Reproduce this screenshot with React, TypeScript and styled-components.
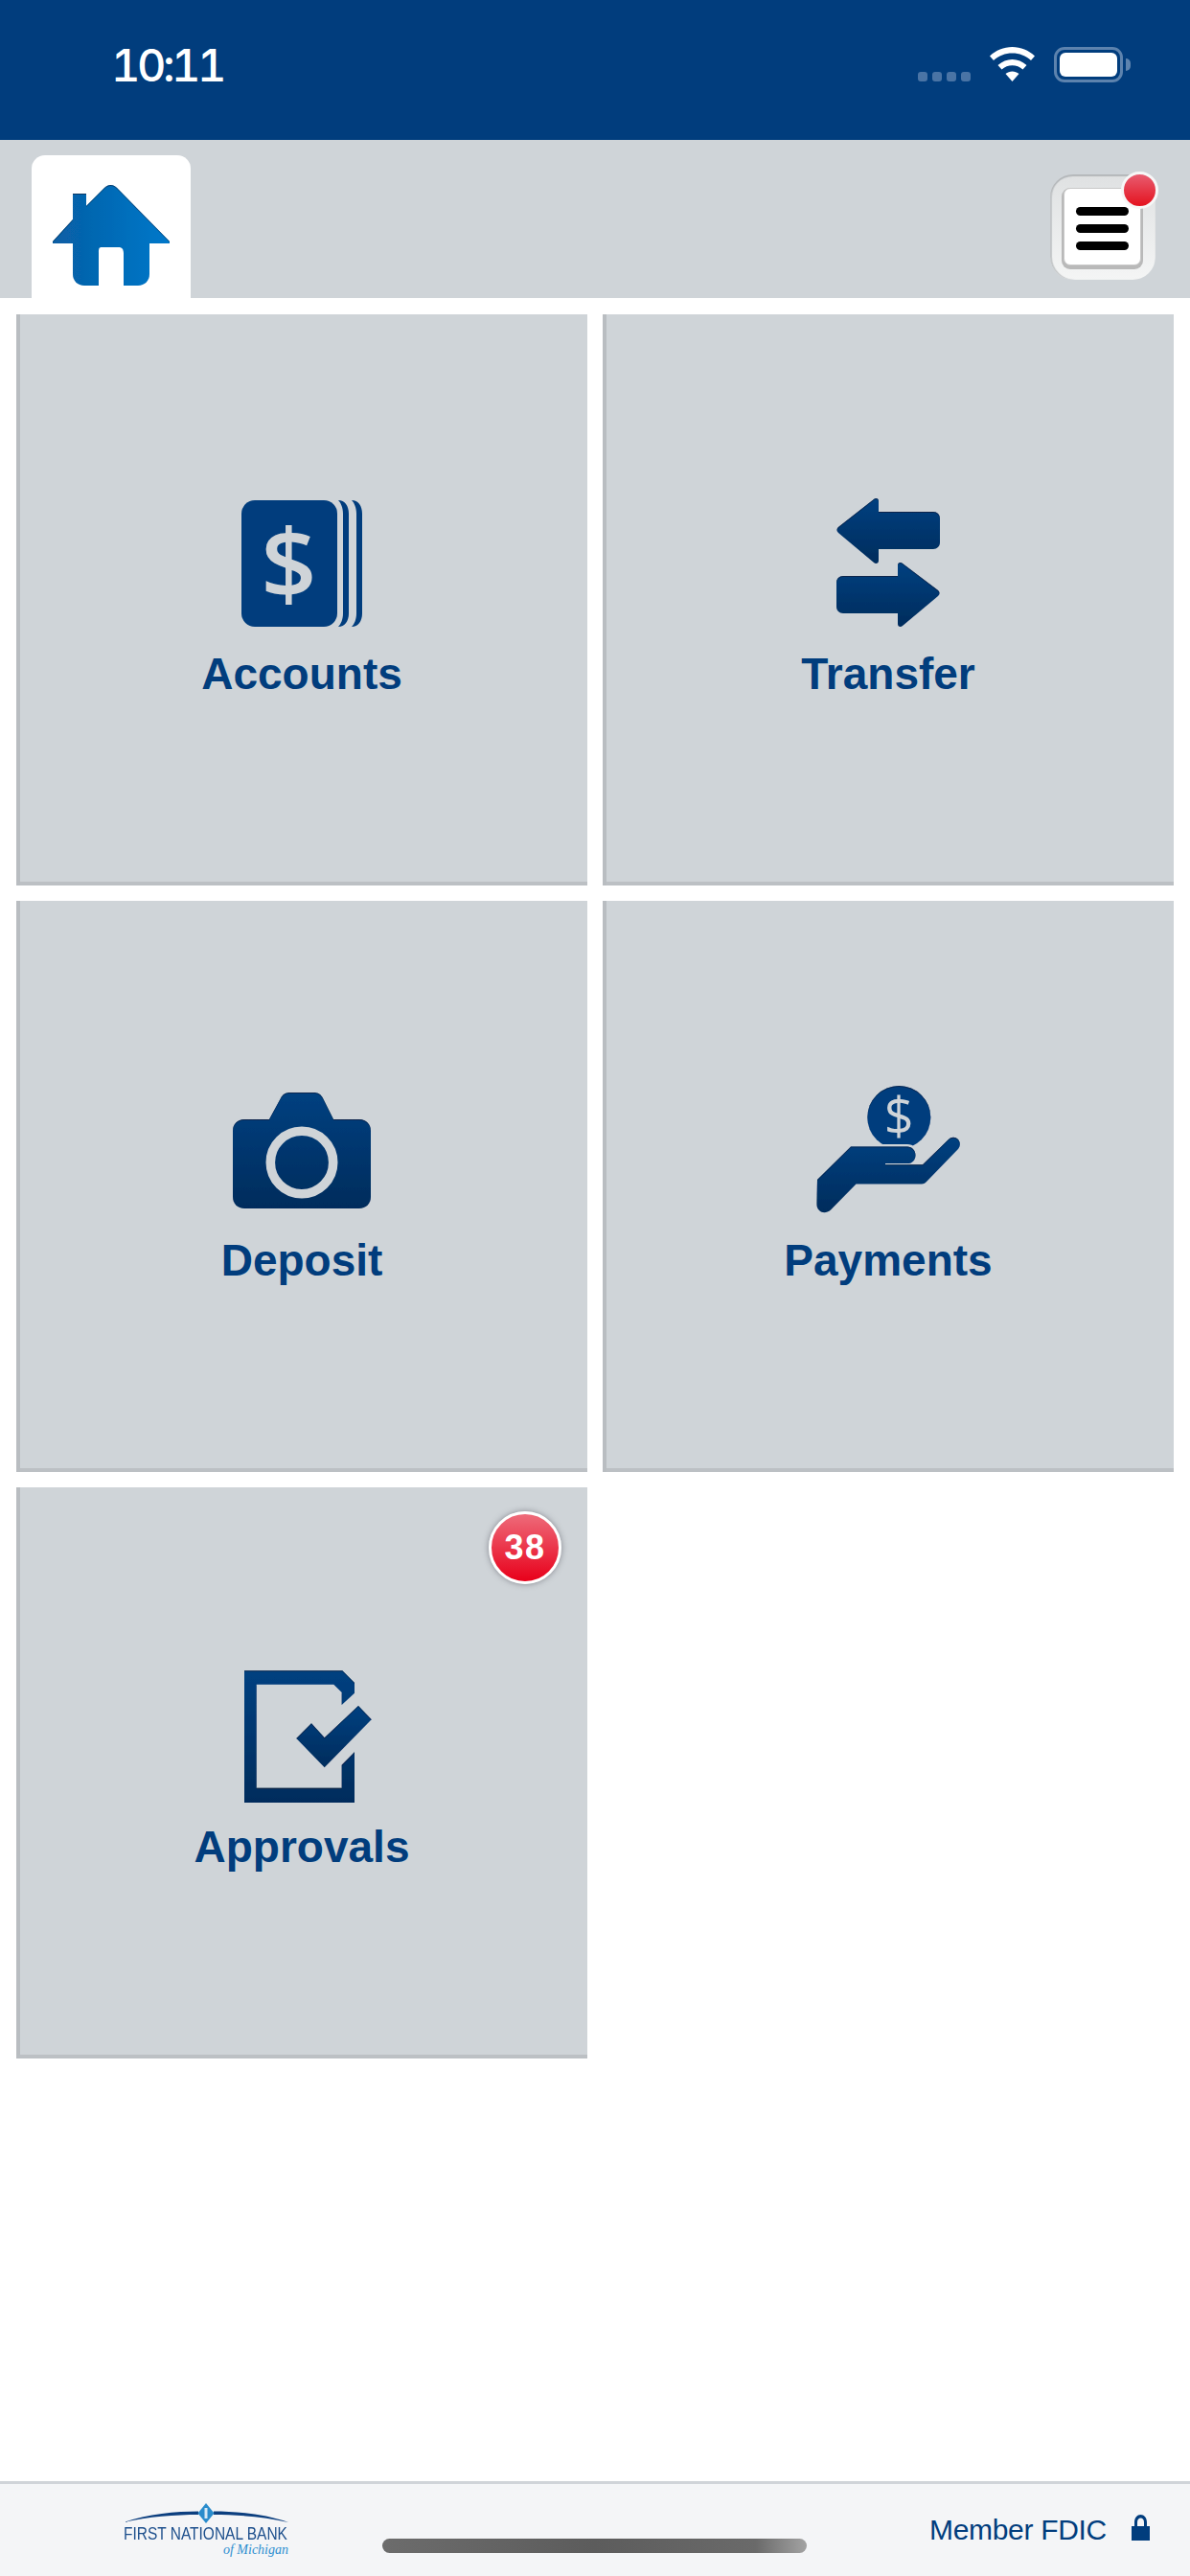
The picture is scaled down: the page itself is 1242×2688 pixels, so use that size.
import React from "react";
import styled, { createGlobalStyle } from "styled-components";

const GlobalStyle = createGlobalStyle`
  html, body {
    margin: 0;
    padding: 0;
    background: #fff;
    font-family: "Liberation Sans", Arial, sans-serif;
  }
`;

const Page = styled.div`
  width: 1242px;
  height: 2688px;
  display: flex;
  flex-direction: column;
  background: #fff;
  overflow: hidden;
`;

// status bar
const StatusBar = styled.div`
  height: 146px;
  flex: none;
  display: flex;
  justify-content: space-between;
  padding: 44px 70px 0 116px;
  box-sizing: border-box;
  background: #013d7d;
  color: #fff;
`;

const Clock = styled.div`
  font-family: Inter, "Liberation Sans", sans-serif;
  font-size: 47px;
  font-weight: 500;
  line-height: 48px;
  letter-spacing: -3.5px;
  font-variant-numeric: tabular-nums;
`;

const StatusIcons = styled.div`
  display: flex;
  align-items: flex-start;
  padding-top: 5px;
`;

const SignalDots = styled.div`
  display: flex;
  gap: 5px;
  margin: 26px 20px 0 0;
`;

const SignalDot = styled.span`
  width: 10px;
  height: 10px;
  border-radius: 3px;
  background: #4a74a5;
`;

const Battery = styled.div`
  width: 72px;
  height: 37px;
  margin-left: 20px;
  padding: 3px;
  box-sizing: border-box;
  border: 3px solid #5d83ae;
  border-radius: 11px;
  position: relative;
  &::before {
    content: "";
    display: block;
    height: 100%;
    background: #fff;
    border-radius: 6px;
  }
  &::after {
    content: "";
    position: absolute;
    right: -11px;
    top: 9px;
    width: 5px;
    height: 13px;
    border-radius: 0 6px 6px 0;
    background: #5d83ae;
  }
`;

// header
const Header = styled.div`
  height: 165px;
  flex: none;
  display: flex;
  justify-content: space-between;
  padding: 16px 36px 0 33px;
  box-sizing: border-box;
  background: #cfd4d8;
`;

const HomeTab = styled.div`
  width: 166px;
  height: 149px;
  background: #fff;
  border-radius: 14px 14px 0 0;
`;

const MenuButton = styled.div`
  width: 110px;
  height: 110px;
  margin-top: 20px;
  padding: 14px 15px 15px 14px;
  box-sizing: border-box;
  position: relative;
  border-radius: 24px;
  background: linear-gradient(#dfe1e2, #f4f5f5);
  box-shadow: inset 0 2px 1px #b4b7ba, inset 2px 0 1px #c4c7c9;
`;

const MenuFace = styled.div`
  height: 100%;
  display: flex;
  flex-direction: column;
  align-items: center;
  gap: 9px;
  padding-top: 19px;
  box-sizing: border-box;
  background: #fff;
  border-radius: 7px;
  border: 1px solid #c8c8c8;
  box-shadow: 0 2px 0 2px #b9b9b9;
`;

const MenuLine = styled.span`
  width: 55px;
  height: 9px;
  border-radius: 5px;
  background: #000;
`;

const MenuDot = styled.span`
  position: absolute;
  right: -3px;
  top: -3px;
  width: 33px;
  height: 33px;
  border: 3px solid #f7f7f7;
  border-radius: 50%;
  background: linear-gradient(#e85c70, #e4121e);
`;

// tile grid
const Grid = styled.div`
  flex: 1;
  display: grid;
  grid-template-columns: 596px 596px;
  grid-auto-rows: 596px;
  gap: 16px;
  padding: 17px;
  box-sizing: border-box;
  align-content: start;
`;

const Tile = styled.div`
  position: relative;
  display: flex;
  flex-direction: column;
  align-items: center;
  justify-content: center;
  gap: 17px;
  padding-bottom: 13px;
  box-sizing: border-box;
  background: #cfd4d8;
  box-shadow: inset 4px 0 0 #b9bdc1, inset 0 -4px 0 #bcc0c4;
`;

const TileIcon = styled.svg`
  width: 160px;
  height: 150px;
  flex: none;
`;

const TileLabel = styled.div`
  font-size: 46px;
  font-weight: 700;
  line-height: 52px;
  color: #013d7d;
`;

const CountBadge = styled.div`
  position: absolute;
  top: 25px;
  right: 27px;
  width: 76px;
  height: 76px;
  box-sizing: border-box;
  display: flex;
  align-items: center;
  justify-content: center;
  border: 3px solid #fff;
  border-radius: 50%;
  background: linear-gradient(#ee6b7a, #e8001a);
  box-shadow: 0 0 6px rgba(70, 70, 80, 0.55);
  color: #fff;
  font-size: 36px;
  font-weight: 700;
  letter-spacing: 1.5px;
`;

// footer
const Footer = styled.div`
  height: 99px;
  flex: none;
  position: relative;
  display: flex;
  justify-content: space-between;
  padding: 20px 42px 0 129px;
  box-sizing: border-box;
  background: #f4f5f7;
  border-top: 3px solid #d0d4d9;
`;

const Logo = styled.div`
  width: 172px;
  display: flex;
  flex-direction: column;
`;

const LogoMark = styled.svg`
  width: 172px;
  height: 24px;
  display: block;
`;

const LogoName = styled.div`
  font-size: 18px;
  line-height: 16px;
  color: #1d4f8c;
  white-space: nowrap;
  transform: scaleX(0.86);
  transform-origin: left center;
`;

const LogoPlace = styled.div`
  font-family: "Liberation Serif", serif;
  font-style: italic;
  font-size: 14px;
  line-height: 14px;
  margin-top: 2px;
  text-align: right;
  color: #2d8fd0;
`;

const Fdic = styled.div`
  display: flex;
  align-items: flex-start;
  gap: 26px;
  color: #013d7d;
  font-size: 30px;
  line-height: 32px;
  letter-spacing: -0.3px;
  padding-top: 12px;
`;

const LockIcon = styled.svg`
  width: 19px;
  height: 27px;
`;

const HomeIndicator = styled.div`
  position: absolute;
  left: 399px;
  top: 57px;
  width: 443px;
  height: 15px;
  border-radius: 8px;
  background: linear-gradient(90deg, #6c6c6c 0%, #5c5c5c 50%, #6a6a6a 88%, #a3a3a3 100%);
`;

const BG = "#cfd4d8";

// shared defs, top edge of the icons carries a thin dark line
const IconDefs = () => (
  <defs>
    <linearGradient id="navy" x1="0" y1="0" x2="0" y2="1">
      <stop offset="0" stopColor="#014080" />
      <stop offset="1" stopColor="#012c5c" />
    </linearGradient>
    <linearGradient id="homeBlue" x1="0" y1="0" x2="1" y2="0">
      <stop offset="0" stopColor="#085ea4" />
      <stop offset="1" stopColor="#0078ca" />
    </linearGradient>
    <filter id="edge" x="-5%" y="-5%" width="110%" height="110%">
      <feOffset in="SourceAlpha" dy="1" result="moved" />
      <feComposite in="SourceAlpha" in2="moved" operator="out" result="rim" />
      <feFlood floodColor="#0c1c30" floodOpacity="0.75" />
      <feComposite in2="rim" operator="in" result="line" />
      <feMerge>
        <feMergeNode in="SourceGraphic" />
        <feMergeNode in="line" />
      </feMerge>
    </filter>
  </defs>
);

const HomeIcon = () => (
  <svg width="166" height="149" viewBox="0 0 166 149">
    <IconDefs />
    <path
      filter="url(#edge)"
      fill="url(#homeBlue)"
      d="M43 40H57V53L76 34C80 30 85 30 89 34L144 90V92H123V124C123 131 118 136 111 136H96V102C96 98 94 96 91 96H73C70 96 70 98 70 102V136H55C48 136 43 131 43 124V92H22V90L43 67Z"
    />
  </svg>
);

const AccountsIcon = () => (
  <TileIcon viewBox="0 0 160 150">
    <rect x="17" y="12" width="100" height="132" rx="14" fill="#013d7d" />
    <path
      fill="#013d7d"
      d="M118 12C125 12 129 18 129 26V130C129 138 125 144 118 144C121 141 123 136 123 130V26C123 20 121 15 118 12Z"
    />
    <path
      fill="#013d7d"
      d="M132 12C139 12 143 18 143 26V130C143 138 139 144 132 144C135 141 137 136 137 130V26C137 20 135 15 132 12Z"
    />
    <text x="66.5" y="115" textAnchor="middle" fontFamily="Open Sans" fontWeight="600" fontSize="102" fill={BG}>
      $
    </text>
  </TileIcon>
);

const TransferIcon = () => (
  <TileIcon viewBox="0 0 160 150">
    <IconDefs />
    <g filter="url(#edge)" fill="url(#navy)">
      <path d="M70 13V24H127C131 24 134 27 134 31V56C134 60 131 63 127 63H70V75C70 78 67 79 65 77L28 46C26 44 26 42 28 40L65 11C67 9 70 10 70 13Z" />
      <path d="M90 80V91H33C29 91 26 94 26 98V123C26 127 29 130 33 130H90V141C90 144 93 145 95 143L132 112C134 110 134 108 132 106L95 78C93 76 90 77 90 80Z" />
    </g>
  </TileIcon>
);

const DepositIcon = () => (
  <TileIcon viewBox="0 0 160 150">
    <IconDefs />
    <path
      filter="url(#edge)"
      fill="url(#navy)"
      d="M46 46L58 24C60 20 63 18 68 18H92C97 18 100 20 102 24L113 46H140C147 46 152 51 152 58V127C152 134 147 139 140 139H20C13 139 8 134 8 127V58C8 51 13 46 20 46Z"
    />
    <circle cx="80" cy="91" r="32.7" fill="none" stroke={BG} strokeWidth="9.6" />
  </TileIcon>
);

const PaymentsIcon = () => {
  const hand =
    "M6 109L41 74.5H100C105 74.5 108.5 78.5 108.5 83.5C108.5 88.5 105 92.3 100 92.3H77V93.3H116L143 67C146 64 150 64 153 67C155.5 70 155.5 74 153 77L121 110C119 112.5 117 113.5 115 113.5H46.5L20 140.5C16 144 11 144 8 141C6 139 5.5 137 5.5 134Z";
  return (
    <TileIcon viewBox="0 0 160 150">
      <IconDefs />
      <circle cx="91.3" cy="44" r="33" fill="#013d7d" filter="url(#edge)" />
      <text x="91.3" y="62" textAnchor="middle" fontFamily="Open Sans" fontWeight="500" fontSize="54" fill={BG}>
        $
      </text>
      <path d={hand} fill={BG} stroke={BG} strokeWidth="5" />
      <path d={hand} fill="url(#navy)" filter="url(#edge)" />
      <path d="M77 92.5H116" stroke={BG} strokeWidth="1.2" />
    </TileIcon>
  );
};

const ApprovalsIcon = () => (
  <TileIcon viewBox="0 0 160 150">
    <IconDefs />
    <g filter="url(#edge)" fill="url(#navy)">
      <path d="M20 9.3H122.3L135 22V32.7L121.7 45V32L113.3 23.7H32.7V131.7H121.7V107.7L135 94.3V147H20Z" />
      <path d="M139 46L152.7 60.3L103.7 110.3L74.3 80L90 64.3L103.7 79.3Z" />
    </g>
  </TileIcon>
);

const tiles = [
  { label: "Accounts", icon: <AccountsIcon /> },
  { label: "Transfer", icon: <TransferIcon /> },
  { label: "Deposit", icon: <DepositIcon /> },
  { label: "Payments", icon: <PaymentsIcon /> },
  { label: "Approvals", icon: <ApprovalsIcon />, count: 38 },
];

const App: React.FC = () => {
  return (
    <Page>
      <GlobalStyle />
      <StatusBar>
        <Clock>10:11</Clock>
        <StatusIcons>
          <SignalDots>
            <SignalDot />
            <SignalDot />
            <SignalDot />
            <SignalDot />
          </SignalDots>
          <svg width="47" height="36" viewBox="0 0 47 36">
            <path
              fill="#fff"
              d="M23.5 0C32.5 0 40.5 3.5 47 9.5L43 14C37.5 9 31 6.5 23.5 6.5C16 6.5 9.5 9 4 14L0 9.5C6.5 3.5 14.5 0 23.5 0Z"
            />
            <path
              fill="#fff"
              d="M23.5 13C29 13 34 15 38.5 19L34.5 23.5C31.5 20.8 27.5 19.3 23.5 19.3C19.5 19.3 15.5 20.8 12.5 23.5L8.5 19C13 15 18 13 23.5 13Z"
            />
            <path fill="#fff" d="M23.5 25.5C26 25.5 28.5 26.5 30.5 28L23.5 36L16.5 28C18.5 26.5 21 25.5 23.5 25.5Z" />
          </svg>
          <Battery />
        </StatusIcons>
      </StatusBar>

      <Header>
        <HomeTab>
          <HomeIcon />
        </HomeTab>
        <MenuButton>
          <MenuFace>
            <MenuLine />
            <MenuLine />
            <MenuLine />
          </MenuFace>
          <MenuDot />
        </MenuButton>
      </Header>

      <Grid>
        {tiles.map((tile) => (
          <Tile key={tile.label}>
            {tile.icon}
            <TileLabel>{tile.label}</TileLabel>
            {tile.count ? <CountBadge>{tile.count}</CountBadge> : null}
          </Tile>
        ))}
      </Grid>

      <Footer>
        <Logo>
          <LogoMark viewBox="0 0 172 24">
            <path fill="#0c3f7f" d="M0 20C25 11 55 8.5 78 8.5V12C55 12 25 14 0 20Z" />
            <path fill="#0c3f7f" d="M172 20C147 11 117 8.5 94 8.5V12C117 12 147 14 172 20Z" />
            <path fill="#2a8ccc" d="M86 0L94.5 10.5L86 21L77.5 10.5Z" />
            <path fill="#d6e8f5" d="M84.5 5H87.5V16H84.5Z" />
          </LogoMark>
          <LogoName>FIRST NATIONAL BANK</LogoName>
          <LogoPlace>of Michigan</LogoPlace>
        </Logo>
        <Fdic>
          Member FDIC
          <LockIcon viewBox="0 0 19 27">
            <path fill="#013d7d" d="M3 12V8C3 3 6 0 9.5 0C13 0 16 3 16 8V12H19V27H0V12ZM6 12H13V8C13 5 11.5 3.5 9.5 3.5C7.5 3.5 6 5 6 8Z" />
          </LockIcon>
        </Fdic>
        <HomeIndicator />
      </Footer>
    </Page>
  );
};

export default App;
